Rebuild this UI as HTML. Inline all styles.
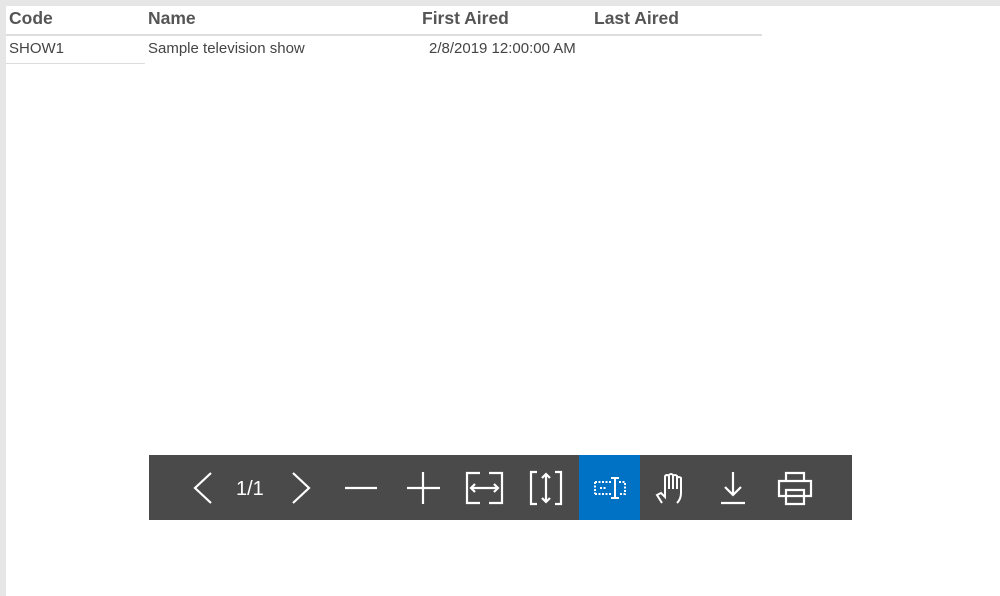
<!DOCTYPE html>
<html><head><style>
body{margin:0;width:1000px;height:596px;background:#e6e6e6;position:relative;overflow:hidden;font-family:"Liberation Sans",Arial,sans-serif}
#pg{position:absolute;left:6px;top:6px;width:994px;height:590px;background:#fff}
.t{position:absolute;white-space:nowrap;color:#555}
.h{font-weight:bold;font-size:17.5px;top:2px}
.r{font-size:15px;top:34px;color:#444}
#tb{position:absolute;left:149px;top:455px;width:703px;height:65px;background:#4a4a4a}
svg{position:absolute}
</style></head><body>
<div id="pg">
<div class="t h" style="left:3px">Code</div>
<div class="t h" style="left:142px">Name</div>
<div class="t h" style="left:416px">First Aired</div>
<div class="t h" style="left:588px">Last Aired</div>
<div style="position:absolute;left:0;top:28px;width:756px;height:2px;background:#ddd"></div>
<div class="t r" style="left:3px">SHOW1</div>
<div class="t r" style="left:142px">Sample television show</div>
<div class="t r" style="left:423px">2/8/2019 12:00:00 AM</div>
<div style="position:absolute;left:0;top:57px;width:139px;height:1px;background:#ddd"></div>
</div>
<div id="tb">
<svg width="703" height="65" fill="none" stroke="#fff" stroke-width="2.2">
<path d="M62 18 L46 33 L62 48"/>
<text x="87" y="40" fill="#fff" stroke="none" font-size="20" font-family="Liberation Sans">1/1</text>
<path d="M144 18 L160 33 L144 48"/>
<path d="M196 33 H228"/>
<path d="M258 33 H291 M274 17 V49"/>
<path d="M331 18 H318 V48 H331 M340 18 H353 V48 H340 M322 33 H349 M326 29 L322 33 L326 37 M345 29 L349 33 L345 37"/>
<path d="M388 17 H382 V49 H388 M406 17 H412 V49 H406 M397 19 V47 M393 23 L397 19 L401 23 M393 43 L397 47 L401 43"/>
<rect x="430" y="0" width="61" height="65" fill="#0072c6" stroke="none"/>
<path d="M446 27 H462 M446 39 H462 M446 27 V39 M451 33 H458 M466 23 V43 M462 23 H470 M462 43 H470 M470 27 H476 V39 H470" stroke-dasharray="2 1.5" stroke-width="2"/>
<path d="M466 23 V43 M462 23 H470 M462 43 H470" stroke-width="2"/>
<path d="M513 48 L508 40 L512 38 L516 42 V22 Q516 20 518 20 Q520 20 520 22 V34 M520 20 Q522 18 524 20 V34 M524 21 Q526 19 528 21 V34 M528 23 Q530 21 532 23 V38 Q532 44 528 48" stroke-width="2"/>
<path d="M584 17 V40 M576 32 L584 40 L592 32 M572 48 H596"/>
<path d="M637 26 V18 H655 V26 M630 26 H662 V41 H630 Z M637 35 H655 V49 H637 Z"/>
</svg>
</div>
</body></html>
